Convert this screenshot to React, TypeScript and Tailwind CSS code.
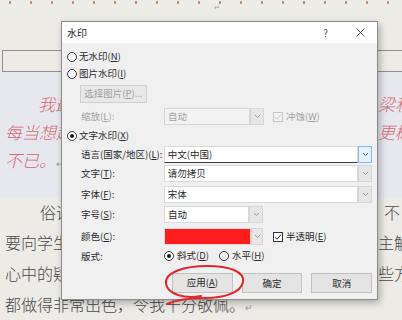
import React from "react";

const ui = "font-['Noto_Sans_CJK_SC','Noto_Sans',sans-serif]";

function Radio({ checked }: { checked?: boolean }) {
  return (
    <span className="flex h-[10px] w-[10px] shrink-0 items-center justify-center rounded-full border border-[#3a3a3a] bg-white">
      {checked && <span className="h-[4px] w-[4px] rounded-full bg-[#1a1a1a]" />}
    </span>
  );
}

function Check({ disabled }: { disabled?: boolean }) {
  const c = disabled ? "#c4c4c4" : "#222";
  return (
    <span
      className={
        "flex h-[10px] w-[10px] shrink-0 items-center justify-center border " +
        (disabled ? "border-[#c8c8c8] bg-[#f4f4f4]" : "border-[#333] bg-white")
      }
    >
      <svg width="8" height="8" viewBox="0 0 8 8">
        <path d="M1 4.2 L3 6.2 L7 1.6" fill="none" stroke={c} strokeWidth="1" />
      </svg>
    </span>
  );
}

// label with underlined access key
function Lbl({ t, k, end = "" }: { t: string; k?: string; end?: string }) {
  return (
    <span className="whitespace-nowrap leading-none">
      {t}
      {k && (
        <>
          (<span className="underline underline-offset-1">{k}</span>)
        </>
      )}
      {end}
    </span>
  );
}

function Arrow({ color = "#8a8a8a" }: { color?: string }) {
  return (
    <svg width="7" height="5" viewBox="0 0 7 5">
      <path d="M1 1 L3.5 3.5 L6 1" fill="none" stroke={color} strokeWidth="1" />
    </svg>
  );
}

function Combo({
  text,
  w,
  disabled,
  focus,
}: {
  text: string;
  w: string;
  disabled?: boolean;
  focus?: boolean;
}) {
  return (
    <div className={"flex h-[17px] " + w}>
      <div
        className={
          "flex flex-1 items-center border pl-[3px] " +
          (disabled
            ? "border-[#d6d6d6] bg-[#f3f3f3] text-[#a3a3a3]"
            : focus
              ? "border-[#d9d9d9] border-b-[#3c3c3c] bg-white"
              : "border-[#d9d9d9] bg-white")
        }
      >
        {text}
      </div>
      <div
        className={
          "flex w-[14px] items-center justify-center border " +
          (focus ? "border-[#86b9e8] bg-[#e5f1fb]" : "border-[#d6d6d6] bg-[#e6e6e6]")
        }
      >
        <Arrow color={focus ? "#4a4a4a" : "#9a9a9a"} />
      </div>
    </div>
  );
}

function Btn({ children }: { children: React.ReactNode }) {
  return (
    <div className="flex h-[20px] w-[61px] items-center justify-center border border-[#c2c2c2] bg-[#e4e4e4]">
      {children}
    </div>
  );
}

function Dialog() {
  return (
    <div
      className={
        "absolute left-[61px] top-[21px] h-[279px] w-[317px] border border-[#8c8c8c] bg-[#f0f0f0] text-[9.5px] text-[#2a2a2a] shadow-[2px_3px_7px_rgba(0,0,0,0.28)] " +
        ui
      }
    >
      <div className="flex h-[21px] items-center bg-white pl-[5px] text-[10px]">
        <span>水印</span>
        <span className="ml-auto mr-[28px] text-[10px] text-[#555]">?</span>
        <svg className="mr-[12px]" width="9" height="9" viewBox="0 0 9 9">
          <path d="M0.5 0.5 L8.5 8.5 M8.5 0.5 L0.5 8.5" stroke="#444" strokeWidth="0.9" />
        </svg>
      </div>

      <div className="flex flex-col px-[5px]">
        <div className="mt-[5px] flex h-[17px] items-center gap-[2px]">
          <Radio />
          <Lbl t="无水印" k="N" />
        </div>
        <div className="flex h-[17px] items-center gap-[2px]">
          <Radio />
          <Lbl t="图片水印" k="I" />
        </div>
        <div className="ml-[13px] mt-[3px] flex h-[18px] w-[67px] items-center justify-center border border-[#d0d0d0] bg-[#e8e8e8] text-[#a0a0a0]">
          <Lbl t="选择图片" k="P" end="..." />
        </div>
        <div className="mt-[5px] flex h-[17px] items-center pl-[14px]">
          <div className="w-[83px] text-[#a3a3a3]">
            <Lbl t="缩放" k="L" end=":" />
          </div>
          <Combo text="自动" w="w-[100px]" disabled />
          <div className="ml-[9px] flex items-center gap-[3px] text-[#a3a3a3]">
            <Check disabled />
            <Lbl t="冲蚀" k="W" />
          </div>
        </div>
        <div className="mt-[3px] flex h-[16px] items-center gap-[2px]">
          <Radio checked />
          <Lbl t="文字水印" k="X" />
        </div>
        <div className="mt-[2px] flex h-[17px] items-center pl-[14px]">
          <div className="w-[83px]">
            <Lbl t="语言(国家/地区)" k="L" end=":" />
          </div>
          <Combo text="中文(中国)" w="w-[209px]" focus />
        </div>
        <div className="mt-[2px] flex h-[17px] items-center pl-[14px]">
          <div className="w-[83px]">
            <Lbl t="文字" k="T" end=":" />
          </div>
          <Combo text="请勿拷贝" w="w-[209px]" />
        </div>
        <div className="mt-[4px] flex h-[17px] items-center pl-[14px]">
          <div className="w-[83px]">
            <Lbl t="字体" k="F" end=":" />
          </div>
          <Combo text="宋体" w="w-[209px]" />
        </div>
        <div className="mt-[3px] flex h-[17px] items-center pl-[14px]">
          <div className="w-[83px]">
            <Lbl t="字号" k="S" end=":" />
          </div>
          <Combo text="自动" w="w-[99px]" />
        </div>
        <div className="mt-[5px] flex h-[17px] items-center pl-[14px]">
          <div className="w-[83px]">
            <Lbl t="颜色" k="C" end=":" />
          </div>
          <div className="flex h-[17px] w-[99px]">
            <div className="flex-1 border border-[#d9d9d9] bg-[#ff1c1c]" />
            <div className="flex w-[12px] items-center justify-center border border-[#d6d6d6] bg-[#e6e6e6]">
              <Arrow color="#9a9a9a" />
            </div>
          </div>
          <div className="ml-[10px] flex items-center gap-[3px]">
            <Check />
            <Lbl t="半透明" k="E" />
          </div>
        </div>
        <div className="mt-[3px] flex h-[16px] items-center pl-[14px]">
          <div className="w-[83px]">
            <Lbl t="版式:" />
          </div>
          <div className="flex items-center gap-[3px]">
            <Radio checked />
            <Lbl t="斜式" k="D" />
          </div>
          <div className="ml-[10px] flex items-center gap-[3px]">
            <Radio />
            <Lbl t="水平" k="H" />
          </div>
        </div>
        <div className="ml-[105px] mt-[9px] flex gap-[9px]">
          <Btn>
            <Lbl t="应用" k="A" />
          </Btn>
          <Btn>确定</Btn>
          <Btn>取消</Btn>
        </div>
      </div>
    </div>
  );
}

function DocRow({
  h,
  left,
  right,
  pl = "pl-[5px]",
  pr = "pl-0",
  red,
}: {
  h: string;
  left: React.ReactNode;
  right: string;
  pl?: string;
  pr?: string;
  red?: boolean;
}) {
  const txt = red
    ? "text-[17px] italic font-light text-[#d26a75]"
    : "text-[16px] font-light text-[#4a4a4a]";
  return (
    <div className={"grid grid-cols-[378px_1fr] items-center " + h + " " + txt}>
      <div className={"overflow-hidden whitespace-nowrap " + pl}>{left}</div>
      <div className={"overflow-hidden whitespace-nowrap " + pr}>{right}</div>
    </div>
  );
}

export default function App() {
  const dots = Array.from({ length: 19 }, (_, i) => i);
  return (
    <div
      className={
        "relative h-[320px] w-[402px] overflow-hidden bg-[#ecebe6] " + ui
      }
    >
      {/* header area of the page */}
      <div className="h-[50px]">
        <div className="flex gap-[19px] pl-[9px] pt-[1px]">
          {dots.map((d) => (
            <span key={d} className="h-[3px] w-[2px] rounded-[1px] bg-[#b8825c]" />
          ))}
        </div>
        <div className="pl-[214px] text-[7px] leading-none text-[#9a9a9a]">↵</div>
      </div>
      <div className="ml-[2px] mr-[-4px] h-[22px] border border-[#8f8f8f]" />

      {/* shaded block */}
      <div className="h-[126px] bg-[#e7e8ee] pt-[18px]">
        <DocRow h="h-[28px]" red pl="pl-[38px]" left="我最" right="梁秋" />
        <DocRow h="h-[28px]" red left="每当想起" right="更概" />
        <DocRow
          h="h-[28px]"
          red
          left={
            <>
              不已。<span className="not-italic text-[9px] text-[#999]">↵</span>
            </>
          }
          right=""
        />
      </div>

      <DocRow h="h-[28px]" pl="pl-[40px]" pr="pl-[6px]" left="俗话" right="不" />
      <DocRow h="h-[31px]" left="要向学生" right="主解" />
      <DocRow h="h-[31px]" left="心中的疑" right="些方" />
      <DocRow
        h="h-[31px]"
        left={
          <>
            都做得非常出色，令我十分敬佩。
            <span className="text-[9px] text-[#999]">↵</span>
          </>
        }
        right=""
      />

      <Dialog />

      <svg
        className="pointer-events-none absolute left-0 top-0"
        width="402"
        height="320"
        viewBox="0 0 402 320"
      >
        <path
          d="M201 296 C186 299 168 295 166 284 C164 272 185 266 207 266 C230 266 245 272 243 282 C241 293 223 298 205 298 C190 298 176 300 167 304"
          fill="none"
          stroke="#e3262b"
          strokeWidth="2"
          strokeLinecap="round"
        />
      </svg>
    </div>
  );
}
